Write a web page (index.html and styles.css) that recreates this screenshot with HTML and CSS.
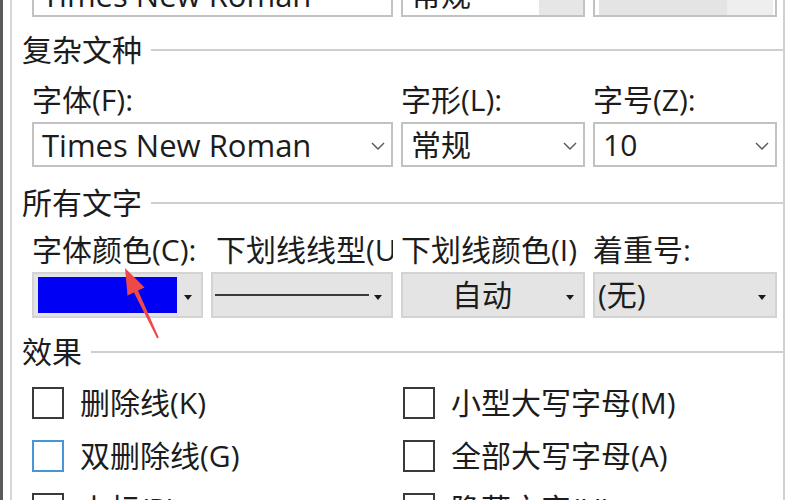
FILE: index.html
```html
<!DOCTYPE html>
<html lang="zh-CN">
<head>
<meta charset="utf-8">
<title>字体</title>
<link rel="stylesheet" href="styles.css">
</head>
<body>
<div class="frame">
  <div class="dialog">
    <div class="grid top-row">
      <div class="combo span2"><span class="val latin">Times New Roman</span></div>
      <div class="combo with-btn"><span class="val">常规</span><span class="btn-area"></span></div>
      <div class="combo shaded"><span class="sel"></span><span class="btn-area light"></span></div>
    </div>

    <div class="heading"><span>复杂文种</span><i class="rule"></i></div>
    <div class="grid labels">
      <div class="lbl span2">字体(F):</div>
      <div class="lbl">字形(L):</div>
      <div class="lbl">字号(Z):</div>
    </div>
    <div class="grid">
      <div class="combo span2"><span class="val latin">Times New Roman</span><svg class="chev" viewBox="0 0 14 8"><polyline points="1,1 7,7 13,1"/></svg></div>
      <div class="combo"><span class="val">常规</span><svg class="chev" viewBox="0 0 14 8"><polyline points="1,1 7,7 13,1"/></svg></div>
      <div class="combo"><span class="val">10</span><svg class="chev" viewBox="0 0 14 8"><polyline points="1,1 7,7 13,1"/></svg></div>
    </div>

    <div class="heading h2"><span>所有文字</span><i class="rule"></i></div>
    <div class="grid labels">
      <div class="lbl">字体颜色(C):</div>
      <div class="lbl shift">下划线线型(U)</div>
      <div class="lbl">下划线颜色(I)</div>
      <div class="lbl">着重号:</div>
    </div>
    <div class="grid">
      <div class="drop"><span class="swatch"></span><span class="tri"></span></div>
      <div class="drop"><span class="line-sample"></span><span class="tri"></span></div>
      <div class="drop"><span class="dval center">自动</span><span class="tri"></span></div>
      <div class="drop"><span class="dval">(无)</span><span class="tri"></span></div>
    </div>

    <div class="heading h3"><span>效果</span><i class="rule"></i></div>
    <div class="checks">
      <label class="chk"><span class="box"></span>删除线(K)</label>
      <label class="chk"><span class="box"></span>小型大写字母(M)</label>
      <label class="chk"><span class="box hover"></span>双删除线(G)</label>
      <label class="chk"><span class="box"></span>全部大写字母(A)</label>
      <label class="chk"><span class="box"></span>上标(P)</label>
      <label class="chk"><span class="box"></span>隐藏文字(H)</label>
    </div>
  </div>
  <svg class="arrow" viewBox="0 0 60 85" width="60" height="85">
    <path d="M12 6 L31.5 25.5 L25 28.6 L45.8 75.6 L44.2 76.4 L21 30.5 L14.5 33.6 Z"/>
  </svg>
</div>
</body>
</html>
```

FILE: styles.css
```css
html, body {
  margin: 0;
  padding: 0;
  background: #ffffff;
  overflow: hidden;
}

body {
  width: 800px;
  height: 500px;
  font-family: "Open Sans", "Noto Sans CJK SC", sans-serif;
  font-size: 30px;
  line-height: 36px;
  color: #1c1c1c;
}

.frame {
  position: relative;
  width: 800px;
  height: 500px;
  box-sizing: border-box;
  border-left: 3px solid #5a5a5a;
  padding-left: 7px;
}

.dialog {
  display: flow-root;
  width: 775px;
  height: 500px;
  box-sizing: border-box;
  border-left: 2px solid #d6d6d6;
  border-right: 2px solid #d0d0d0;
  padding-left: 10px;
}

.grid {
  display: grid;
  grid-template-columns: 171px 182px 184px 184px;
  column-gap: 8px;
  margin-left: 10px;
}

.span2 {
  grid-column: span 2;
}

.top-row {
  margin-top: -28px;
}

.combo {
  position: relative;
  height: 45px;
  box-sizing: border-box;
  border: 2px solid #c2c2c2;
  background: #fff;
  display: flex;
  align-items: center;
  padding-left: 8px;
  overflow: hidden;
}

.combo .val {
  white-space: nowrap;
  line-height: 40px;
}

.combo .val.latin {
  font-size: 31px;
}

.combo.with-btn .btn-area {
  position: absolute;
  right: 0;
  top: 0;
  bottom: 0;
  width: 44px;
  background: #e6e6e6;
}

.combo.shaded {
  padding: 0 2px 0 4px;
}

.combo.shaded .sel {
  flex: 1;
  height: 100%;
  background: #e4e4e4;
}

.combo.shaded .btn-area.light {
  width: 46px;
  height: 100%;
  background: #eeeeee;
}

.chev {
  position: absolute;
  right: 6px;
  top: 18px;
  width: 14px;
  height: 8px;
}

.chev polyline {
  fill: none;
  stroke: #555;
  stroke-width: 1.4;
}

.heading {
  display: flex;
  align-items: center;
  margin-top: 15px;
  height: 36px;
}

.heading span {
  white-space: nowrap;
}

.heading .rule {
  flex: 1;
  height: 2px;
  background: #cfcfcf;
  margin-left: 9px;
  margin-right: 0;
}

.h2 {
  margin-top: 18px;
}

.h3 {
  margin-top: 16px;
}

.labels {
  margin-top: 14px;
  margin-bottom: 4px;
}

.h2 + .labels {
  margin-top: 11px;
}

.lbl {
  white-space: nowrap;
  overflow: hidden;
  height: 36px;
}

.lbl.shift {
  padding-left: 5px;
}

.drop {
  position: relative;
  height: 46px;
  box-sizing: border-box;
  border: 2px solid #d3d3d3;
  background: #e4e4e4;
  display: flex;
  align-items: center;
}

.swatch {
  margin-left: 4px;
  width: 139px;
  height: 36px;
  background: #0000f5;
}

.line-sample {
  margin-left: 2px;
  width: 154px;
  height: 2px;
  background: #3a3a3a;
}

.dval {
  padding-left: 3px;
}

.dval.center {
  flex: 1;
  text-align: center;
  padding-right: 22px;
  padding-left: 0;
}

.tri {
  position: absolute;
  right: 9px;
  top: 21px;
  width: 0;
  height: 0;
  border-left: 4px solid transparent;
  border-right: 4px solid transparent;
  border-top: 5px solid #1a1a1a;
}

.checks {
  display: grid;
  grid-template-columns: 371px 360px;
  row-gap: 21px;
  margin-left: 10px;
  margin-top: 17px;
}

.chk {
  display: flex;
  align-items: center;
  height: 32px;
  white-space: nowrap;
}

.box {
  width: 32px;
  height: 32px;
  box-sizing: border-box;
  border: 2px solid #3a3a3a;
  background: #fff;
  margin-right: 16px;
  flex: none;
}

.box.hover {
  border-color: #4a94d8;
}

.arrow {
  position: absolute;
  left: 110px;
  top: 262px;
}

.arrow path {
  fill: #ef4848;
}
```
